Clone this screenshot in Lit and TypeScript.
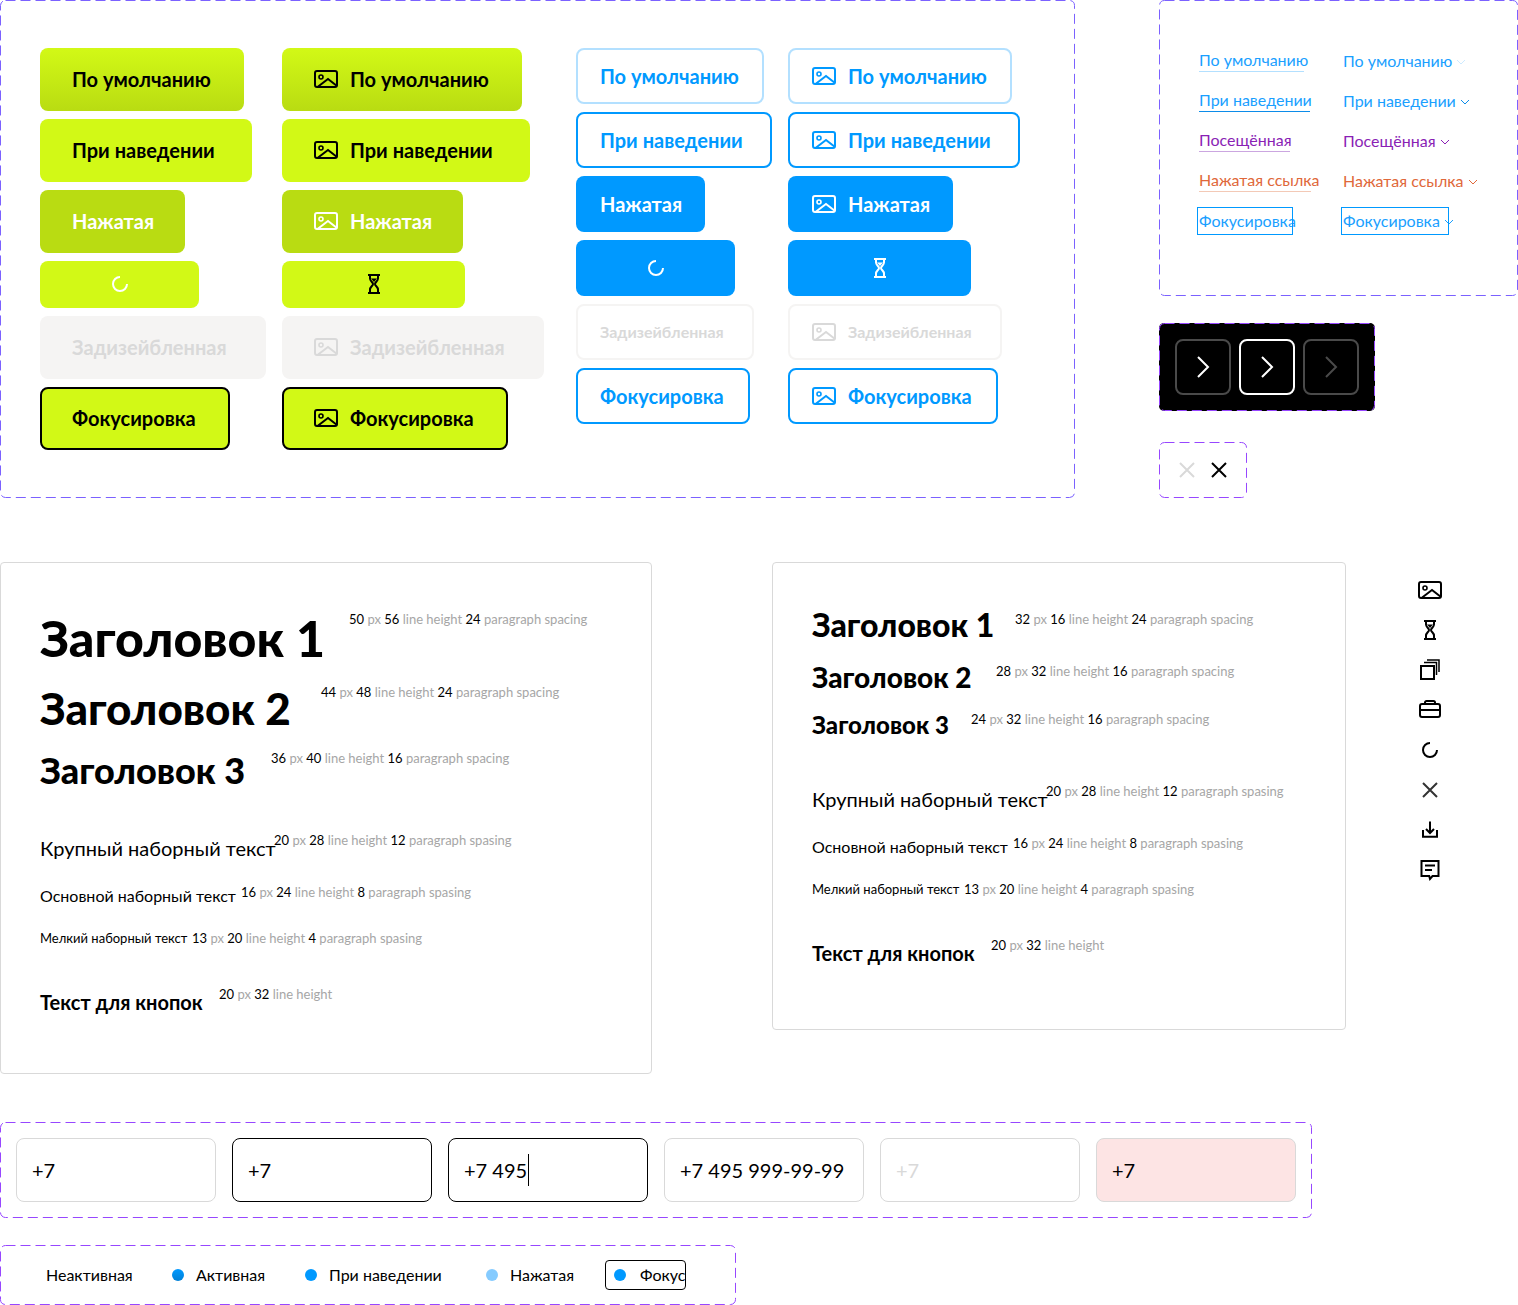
import { LitElement, html, css, nothing } from "lit";
import { customElement } from "lit/decorators.js";

const svgIcon = (body: unknown, cls = "") => html`<svg class="ic ${cls}" viewBox="0 0 24 24" fill="none" stroke="currentColor" stroke-width="2">${body}</svg>`;

const imageIcon = () => html`<svg class="ic" viewBox="0 0 24 24" fill="none" stroke="currentColor" stroke-width="2"><rect x="1" y="4" width="22" height="16" rx="2"/><circle cx="7" cy="10" r="2" stroke-width="1.6"/><path d="M3.5 20 14 12l9 7"/></svg>`;
const hourIcon = () => html`<svg class="ic" viewBox="0 0 24 24" fill="none" stroke="currentColor" stroke-width="2"><path d="M6 3h12M6 21h12M8 3v3.5c0 2.6 3 3.6 3 5.5s-3 2.900-3 5.500V21M16 3v3.500c0 2.600-3 3.600-3 5.500s3 2.900 3 5.500V21"/><path d="M9 6.500h6L12 10z" fill="currentColor" stroke="none"/></svg>`;
const spinIcon = () => html`<svg class="ic" viewBox="0 0 24 24" fill="none" stroke="currentColor" stroke-width="2"><path d="M12 5a7 7 0 1 0 7 7"/></svg>`;
const copyIcon = () => html`<svg class="ic" viewBox="0 0 24 24" fill="none" stroke="currentColor" stroke-width="2"><rect x="3" y="8" width="13" height="13"/><path d="M6 4.500h12.500V17" stroke-width="1.500"/><path d="M9 2h12v12" stroke-width="1.500"/></svg>`;
const caseIcon = () => html`<svg class="ic" viewBox="0 0 24 24" fill="none" stroke="currentColor" stroke-width="2"><rect x="2" y="6" width="20" height="13" rx="2"/><path d="M7 6V4.500C7 3.700 7.700 3 8.500 3h7c.8 0 1.500.7 1.500 1.500V6M2 12h20M10 12h4" /></svg>`;
const closeIcon = () => html`<svg class="ic" viewBox="0 0 24 24" fill="none" stroke="currentColor" stroke-width="2"><path d="M5 5l14 14M19 5 5 19"/></svg>`;
const downIcon = () => html`<svg class="ic" viewBox="0 0 24 24" fill="none" stroke="currentColor" stroke-width="2"><path d="M12 3.500V15M8 11l4 4 4-4M5 12v6.800h14V12"/></svg>`;
const noteIcon = () => html`<svg class="ic" viewBox="0 0 24 24" fill="none" stroke="currentColor" stroke-width="2"><path d="M3.500 3h17v15h-6l-2.500 3-.8-3H3.500z"/><path d="M7 7.500h10M7 12h7" /></svg>`;
const chevron = () => html`<svg class="chev" viewBox="0 0 10 6" fill="none" stroke="currentColor" stroke-width="1"><path d="M1 1l4 4 4-4"/></svg>`;
const nextIcon = () => html`<svg class="ic" viewBox="0 0 24 24" fill="none" stroke="currentColor" stroke-width="2"><path d="M7 2l10 10L7 22"/></svg>`;

type Btn = { cls: string; t?: string; w: number; icon?: "img" | "spin" | "hour" };
const greenA: Btn[] = [
  { cls: "def", t: "По умолчанию", w: 204 },
  { cls: "hov", t: "При наведении", w: 212 },
  { cls: "pre", t: "Нажатая", w: 145 },
  { cls: "load", w: 159, icon: "spin" },
  { cls: "dis", t: "Задизейбленная", w: 226 },
  { cls: "foc", t: "Фокусировка", w: 190 },
];
const greenB: Btn[] = [
  { cls: "def", t: "По умолчанию", w: 240, icon: "img" },
  { cls: "hov", t: "При наведении", w: 248, icon: "img" },
  { cls: "pre", t: "Нажатая", w: 181, icon: "img" },
  { cls: "load", w: 183, icon: "hour" },
  { cls: "dis", t: "Задизейбленная", w: 262, icon: "img" },
  { cls: "foc", t: "Фокусировка", w: 226, icon: "img" },
];
const blueA: Btn[] = [
  { cls: "def", t: "По умолчанию", w: 188 },
  { cls: "hov", t: "При наведении", w: 196 },
  { cls: "pre", t: "Нажатая", w: 129 },
  { cls: "load", w: 159, icon: "spin" },
  { cls: "dis", t: "Задизейбленная", w: 178 },
  { cls: "foc", t: "Фокусировка", w: 174 },
];
const blueB: Btn[] = [
  { cls: "def", t: "По умолчанию", w: 224, icon: "img" },
  { cls: "hov", t: "При наведении", w: 232, icon: "img" },
  { cls: "pre", t: "Нажатая", w: 165, icon: "img" },
  { cls: "load", w: 183, icon: "hour" },
  { cls: "dis", t: "Задизейбленная", w: 214, icon: "img" },
  { cls: "foc", t: "Фокусировка", w: 210, icon: "img" },
];

type Row = { title: string; tcls: string; tw: number; mt: number; a: string; b: string; c?: string; tail?: string };
const leftRows: Row[] = [
  { title: "Заголовок 1", tcls: "h50", tw: 293, mt: 0, a: "50", b: "56", c: "24", tail: "paragraph spacing" },
  { title: "Заголовок 2", tcls: "h44", tw: 265, mt: 16, a: "44", b: "48", c: "24", tail: "paragraph spacing" },
  { title: "Заголовок 3", tcls: "h36", tw: 215, mt: 16, a: "36", b: "40", c: "16", tail: "paragraph spacing" },
  { title: "Крупный наборный текст", tcls: "b20", tw: 218, mt: 40, a: "20", b: "28", c: "12", tail: "paragraph spasing" },
  { title: "Основной наборный текст", tcls: "b16", tw: 185, mt: 20, a: "16", b: "24", c: "8", tail: "paragraph spasing" },
  { title: "Мелкий наборный текст", tcls: "b13", tw: 136, mt: 20, a: "13", b: "20", c: "4", tail: "paragraph spasing" },
  { title: "Текст для кнопок", tcls: "btn", tw: 163, mt: 36, a: "20", b: "32" },
];
const rightRows: Row[] = [
  { title: "Заголовок 1", tcls: "h32", tw: 187, mt: 0, a: "32", b: "16", c: "24", tail: "paragraph spacing" },
  { title: "Заголовок 2", tcls: "h28", tw: 168, mt: 20, a: "28", b: "32", c: "16", tail: "paragraph spacing" },
  { title: "Заголовок 3", tcls: "h24", tw: 143, mt: 16, a: "24", b: "32", c: "16", tail: "paragraph spacing" },
  { title: "Крупный наборный текст", tcls: "b20", tw: 218, mt: 40, a: "20", b: "28", c: "12", tail: "paragraph spasing" },
  { title: "Основной наборный текст", tcls: "b16", tw: 185, mt: 20, a: "16", b: "24", c: "8", tail: "paragraph spasing" },
  { title: "Мелкий наборный текст", tcls: "b13", tw: 136, mt: 20, a: "13", b: "20", c: "4", tail: "paragraph spasing" },
  { title: "Текст для кнопок", tcls: "btn", tw: 163, mt: 36, a: "20", b: "32" },
];

const links = [
  { t: "По умолчанию", cls: "l-def", w: 105, w2: 105 },
  { t: "При наведении", cls: "l-hov", w: 111, w2: 111 },
  { t: "Посещённая", cls: "l-vis", w: 91, w2: 91 },
  { t: "Нажатая ссылка", cls: "l-pre", w: 112, w2: 112 },
  { t: "Фокусировка", cls: "l-foc", w: 92, w2: 92 },
];

const inputs = [
  { v: "+7", cls: "" },
  { v: "+7", cls: "black" },
  { v: "+7 495", cls: "black caret" },
  { v: "+7 495 999-99-99", cls: "" },
  { v: "+7", cls: "off" },
  { v: "+7", cls: "err" },
];

const radios = [
  { t: "Неактивная", w: 80, dot: "" },
  { t: "Активная", w: 63, dot: "d-act" },
  { t: "При наведении", w: 111, dot: "d-hov" },
  { t: "Нажатая", w: 58, dot: "d-pre" },
];

@customElement("app-root")
export class AppRoot extends LitElement {
  static styles = css`
    :host { display: block; width: 1518px; height: 1305px; overflow: hidden; background: #fff; color: #000;
      font-family: "Lato", "Noto Sans", sans-serif; font-size: 16px; }
    * { box-sizing: border-box; }
    .row { display: flex; align-items: flex-start; }
    .frame { position: relative; }
    .dash { position: absolute; inset: 0; width: 100%; height: 100%; overflow: visible; pointer-events: none; }
    .dash rect { x: .5px; y: .5px; width: calc(100% - 1px); height: calc(100% - 1px); rx: 5px; fill: none; stroke: #7b61ff; stroke-width: 1; stroke-dasharray: 10 5; }
    .frame.vio .dash rect { stroke: #9747ff; }
    .ic { width: 24px; height: 24px; flex: none; display: block; }

    .buttons { width: 1075px; height: 498px; padding: 48px 40px; display: flex; }
    .col { display: flex; flex-direction: column; gap: 8px; align-items: flex-start; }
    .c1 { width: 242px; }
    .c2 { width: 294px; }
    .c3 { width: 212px; }
    .b { display: flex; align-items: center; height: 64px; border-radius: 8px; padding-left: 32px; gap: 12px;
      font-size: 20px; font-weight: 700; line-height: 32px; white-space: nowrap; border: 0 solid transparent; }
    .green .def { background: linear-gradient(180deg, #d2f916 0%, #b9dc12 100%); }
    .green .hov { background: #d2f916; }
    .green .pre { background: #b9dc12; color: #fff; }
    .green .load { background: #d2f916; height: 48px; justify-content: center; padding: 0; }
    .green .load.sp { color: #fff; }
    .green .dis { background: #f5f4f3; color: #d9d9d9; }
    .green .foc { background: #d2f916; border: 2px solid #000; padding-left: 30px; }
    .blue .b { height: 56px; padding-left: 24px; color: #0099ff; }
    .blue .def { border: 2px solid #b3e0ff; padding-left: 22px; }
    .blue .hov { border: 2px solid #0099ff; padding-left: 22px; }
    .blue .pre { background: #0099ff; color: #fff; }
    .blue .load { background: #0099ff; color: #fff; justify-content: center; padding: 0; }
    .blue .dis { border: 2px solid #f5f4f3; padding-left: 22px; color: #d9d9d9; font-size: 16px; }
    .blue .foc { border: 2px solid #0099ff; padding-left: 22px; }

    .side { margin-left: 84px; width: 359px; display: flex; flex-direction: column; align-items: flex-start; }
    .links { width: 359px; height: 296px; padding: 41px 0 0 40px; display: grid; grid-template-columns: 144px 1fr; grid-auto-rows: 40px; font-size: 16px; line-height: 24px; }
    .cell { display: flex; align-items: center; height: 40px; }
    .lk { white-space: nowrap; }
    .lk.ul { border-bottom: 1px solid; height: 23px; line-height: 22px; margin-top: -2px; }
    .l-def { color: #1a9fff; } .l-def.ul { border-color: #b3e0ff; }
    .l-def .chev { color: #cdeaff; }
    .l-hov { color: #1a9fff; } .l-hov.ul { border-color: #0c8ce9; }
    .l-hov .chev { color: #0c8ce9; }
    .l-vis { color: #8a1fb5; } .l-vis.ul { border-color: #cba6e0; }
    .l-pre { color: #e0683a; } .l-pre.ul { border-color: #f3c9b6; }
    .l-foc { color: #1a9fff; }
    .focbox { outline: 1px solid #0099ff; outline-offset: 0; height: 26px; line-height: 26px; margin-left: -1px; padding-left: 1px; display: flex; align-items: center; }
    .chev { width: 10px; height: 6px; flex: none; margin-left: 4px; margin-top: 2px; }
    .lnk2 { display: flex; align-items: center; }

    .dark { margin-top: 27px; width: 216px; height: 88px; background: #000; border-radius: 5px; padding: 16px; display: flex; gap: 8px; }
    .pg { width: 56px; height: 56px; border: 2px solid #4a4a4a; border-radius: 8px; color: #fff; display: flex; align-items: center; justify-content: center; }
    .pg.on { border-color: #fff; }
    .pg.off { color: #4a4a4a; }
    .closes { margin-top: 31px; width: 88px; height: 56px; padding: 16px; display: flex; gap: 8px; }
    .closes .off { color: #d9d9d9; }

    .typo { margin-top: 64px; }
    .tp { border: 1px solid #d9d9d9; border-radius: 4px; padding-left: 39px; }
    .tp.l { width: 652px; height: 512px; padding-top: 46px; }
    .tp.r { width: 574px; height: 468px; padding-top: 46px; margin-left: 120px; }
    .tr { display: flex; align-items: flex-start; white-space: nowrap; }
    .title { flex: none; margin-right: 16px; }
    .spec { font-size: 13px; line-height: 20px; color: #a6a6a6; flex: none; }
    .spec b { color: #000; font-weight: 400; }
    .h50 { font-size: 50px; line-height: 56px; font-weight: 900; padding-top: 1px; }
    .h44 { font-size: 44px; line-height: 48px; font-weight: 900; padding-top: 2px; }
    .h36 { font-size: 36px; line-height: 40px; font-weight: 900; padding-top: 2px; }
    .h32 { font-size: 32px; line-height: 32px; font-weight: 900; }
    .h28 { font-size: 28px; line-height: 32px; font-weight: 900; }
    .h24 { font-size: 24px; line-height: 32px; font-weight: 900; }
    .b20 { font-size: 20px; line-height: 28px; padding-top: 4px; }
    .b16 { font-size: 16px; line-height: 24px; padding-top: 2px; }
    .b13 { font-size: 13px; line-height: 20px; }
    .btn { font-size: 20px; line-height: 32px; font-weight: 700; padding-top: 2px; }

    .icons { margin-left: 72px; padding-top: 16px; display: flex; flex-direction: column; gap: 16px; }
    .icons .x { color: #333; }

    .inputs { margin-top: 48px; width: 1312px; height: 96px; padding: 16px; display: flex; gap: 16px; }
    .in { width: 200px; height: 64px; border: 1px solid #d9d9d9; border-radius: 8px; padding-left: 15px; display: flex; align-items: center; font-size: 20px; line-height: 28px; color: #000; }
    .in.black { border-color: #000; }
    .in.off { color: #d9d9d9; }
    .in.err { background: #fde4e4; }
    .in.caret span { border-right: 1px solid #000; height: 32px; line-height: 32px; padding-right: 1px; }

    .radios { margin-top: 27px; width: 736px; height: 60px; padding-left: 46px; display: flex; align-items: center; }
    .ri { display: flex; align-items: center; gap: 12px; margin-right: 46px; font-size: 16px; line-height: 24px; white-space: nowrap; }
    .ri .t { display: block; }
    .dot { width: 12px; height: 12px; border-radius: 50%; flex: none; }
    .d-act { background: linear-gradient(180deg, #0099ff, #0080d6); }
    .d-hov { background: #0099ff; }
    .d-pre { background: #85cbff; }
    .rf { margin-left: -9px; margin-right: 0; width: 81px; height: 30px; border: 1px solid #000; border-radius: 4px; padding-left: 8px; gap: 14px; overflow: hidden; }
  `;

  private frame(cls: string, content: unknown) {
    return html`<div class="frame ${cls}">${content}<svg class="dash"><rect></rect></svg></div>`;
  }

  private btn(b: Btn) {
    const sp = b.icon === "spin";
    const ic = b.icon === "img" ? imageIcon() : sp ? spinIcon() : b.icon === "hour" ? hourIcon() : nothing;
    return html`<div class="b ${b.cls} ${sp ? "sp" : ""}" style="width:${b.w}px">${ic}${b.t ? html`<span>${b.t}</span>` : nothing}</div>`;
  }

  private trow(r: Row) {
    return html`<div class="tr" style="margin-top:${r.mt}px">
      <div class="title ${r.tcls}" style="width:${r.tw}px">${r.title}</div>
      <div class="spec"><b>${r.a}</b> px <b>${r.b}</b> line height${r.c ? html` <b>${r.c}</b> ${r.tail}` : nothing}</div>
    </div>`;
  }

  render() {
    return html`
      <div class="row">
        ${this.frame("buttons", html`
          <div class="col green c1">${greenA.map((b) => this.btn(b))}</div>
          <div class="col green c2">${greenB.map((b) => this.btn(b))}</div>
          <div class="col blue c3">${blueA.map((b) => this.btn(b))}</div>
          <div class="col blue">${blueB.map((b) => this.btn(b))}</div>
        `)}
        <div class="side">
          ${this.frame("links", links.map((l, i) => html`
            <div class="cell">${i === 4
              ? html`<div class="lk focbox ${l.cls}" style="width:${l.w + 2}px">${l.t}</div>`
              : html`<div class="lk ul ${l.cls}" style="width:${l.w}px">${l.t}</div>`}</div>
            <div class="cell">${i === 4
              ? html`<div class="lk focbox ${l.cls}" style="width:106px">${l.t}${chevron()}</div>`
              : html`<div class="lk lnk2 ${l.cls}">${l.t}${chevron()}</div>`}</div>
          `))}
          ${this.frame("dark vio", html`
            <div class="pg">${nextIcon()}</div>
            <div class="pg on">${nextIcon()}</div>
            <div class="pg off">${nextIcon()}</div>
          `)}
          ${this.frame("closes vio", html`<span class="off">${closeIcon()}</span><span>${closeIcon()}</span>`)}
        </div>
      </div>
      <div class="row typo">
        <div class="tp l">${leftRows.map((r) => this.trow(r))}</div>
        <div class="tp r">${rightRows.map((r) => this.trow(r))}</div>
        <div class="icons">
          ${imageIcon()}${hourIcon()}${copyIcon()}${caseIcon()}${spinIcon()}<span class="x">${closeIcon()}</span>${downIcon()}${noteIcon()}
        </div>
      </div>
      ${this.frame("inputs vio", inputs.map((i) => html`<div class="in ${i.cls}"><span>${i.v}</span></div>`))}
      ${this.frame("radios vio", html`
        ${radios.map((r) => html`<div class="ri">${r.dot ? html`<i class="dot ${r.dot}"></i>` : nothing}<span class="t" style="width:${r.w}px">${r.t}</span></div>`)}
        <div class="ri rf"><i class="dot d-hov"></i><span class="t">Фокус</span></div>
      `)}
    `;
  }
}
void svgIcon;
